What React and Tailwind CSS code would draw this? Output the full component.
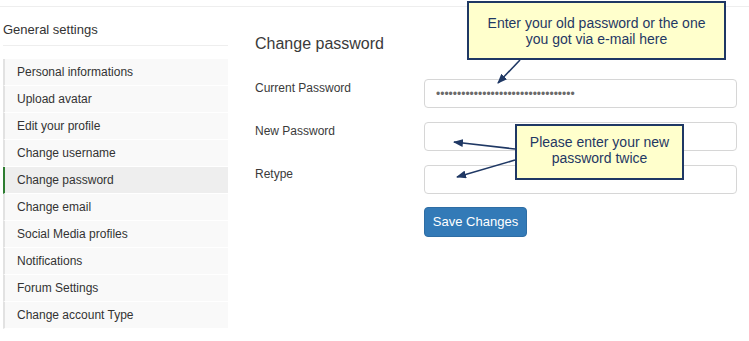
const menu = [
  'Personal informations',
  'Upload avatar',
  'Edit your profile',
  'Change username',
  'Change password',
  'Change email',
  'Social Media profiles',
  'Notifications',
  'Forum Settings',
  'Change account Type',
]

function Field({ label, children }) {
  return (
    <div className="flex">
      <div className="w-[169px] pt-[2px] text-[12px] leading-[14px] text-[#3a3a3a]">{label}</div>
      {children}
    </div>
  )
}

function Input({ value }) {
  return (
    <input
      type="password"
      readOnly
      value={value || ''}
      className="w-[313px] h-[29px] rounded-[4px] border border-[#d6d6d6] bg-white px-[11px] text-[12px] text-[#6a6a6a] outline-none"
    />
  )
}

function Callout({ className, children }) {
  return (
    <div
      className={
        'absolute flex items-center justify-center border-2 border-[#1f3864] bg-[#ffffcc] text-center text-[14px] leading-[16px] text-[#1f3864] ' +
        className
      }
    >
      {children}
    </div>
  )
}

export default function App() {
  return (
    <div className="relative w-[749px] h-[341px] overflow-hidden bg-white font-['Liberation_Sans',Arial,sans-serif]">
      <div className="mt-[6px] border-t border-[#eee]" />
      <div className="flex">
        <aside className="ml-[3px] w-[225px]">
          <div className="pt-[15px] pb-[8px] text-[13px] leading-[15px] text-[#333] border-b border-[#eee]">
            General settings
          </div>
          <ul className="mt-[13px]">
            {menu.map((item) => {
              const active = item === 'Change password'
              return (
                <li
                  key={item}
                  className={
                    'flex h-[27px] items-center border-b border-white border-l-2 pl-[12px] text-[12px] text-[#333] ' +
                    (active ? 'border-l-[#2e7d32] bg-[#eeeeee]' : 'border-l-[#e2e2e2] bg-[#f9f9f9]')
                  }
                >
                  {item}
                </li>
              )
            })}
          </ul>
        </aside>
        <main className="ml-[27px] pt-[27px]">
          <h1 className="text-[16px] leading-[20px] text-[#3a3a3a]">Change password</h1>
          <div className="mt-[25px] flex flex-col gap-[14px]">
            <Field label="Current Password">
              <Input value="qwertyuiopasdfghjklzxcvbnmqwerty1" />
            </Field>
            <Field label="New Password">
              <Input />
            </Field>
            <Field label="Retype">
              <Input />
            </Field>
          </div>
          <div className="mt-[13px] pl-[169px]">
            <button className="h-[30px] w-[103px] rounded-[4px] border border-[#2e6da4] bg-[#337ab7] text-[13px] text-white">
              Save Changes
            </button>
          </div>
        </main>
      </div>

      <Callout className="left-[467px] top-[1px] w-[259px] h-[59px]">
        <span>
          Enter your old password or the one
          <br />
          you got via e-mail here
        </span>
      </Callout>
      <Callout className="left-[515px] top-[124px] w-[169px] h-[56px] pb-[4px]">
        <span>
          Please enter your new
          <br />
          password twice
        </span>
      </Callout>

      <svg className="absolute left-0 top-0 pointer-events-none" width="749" height="341">
        <defs>
          <marker id="ah" markerWidth="10" markerHeight="8" refX="9" refY="4" orient="auto" markerUnits="userSpaceOnUse">
            <path d="M0,0 L10,4 L0,8 Z" fill="#1f3864" />
          </marker>
        </defs>
        <g stroke="#1f3864" strokeWidth="1.6" fill="none">
          <line x1="520" y1="60" x2="498" y2="83" markerEnd="url(#ah)" />
          <line x1="515" y1="149" x2="454" y2="142" markerEnd="url(#ah)" />
          <line x1="515" y1="160" x2="457" y2="177" markerEnd="url(#ah)" />
        </g>
      </svg>
    </div>
  )
}
